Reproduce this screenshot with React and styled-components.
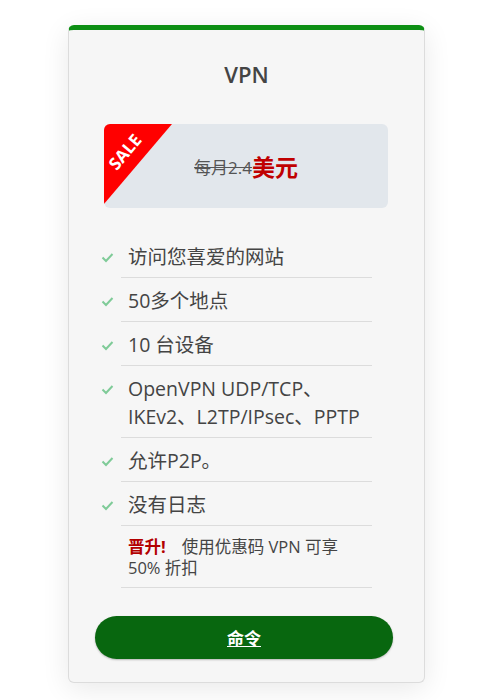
import styled, { createGlobalStyle } from 'styled-components'

const GlobalStyle = createGlobalStyle`
  body {
    margin: 0;
    background: #ffffff;
    font-family: "Open Sans", "Noto Sans CJK SC", sans-serif;
  }
`

const Page = styled.div`
  padding: 25px 0 18px 68px;
`

const Card = styled.div`
  width: 355px;
  background: #f6f6f6;
  border: 1px solid #dcdcdc;
  border-top: 5px solid #0d8f14;
  border-radius: 6px;
  box-shadow: 0 6px 28px rgba(0, 0, 0, 0.09);
  padding-bottom: 23px;
`

const Title = styled.h2`
  margin: 30px 0 0;
  text-align: center;
  font-size: 22px;
  font-weight: 600;
  line-height: 28px;
  color: #444;
`

const PriceBox = styled.div`
  position: relative;
  margin: 36px 36px 0 35px;
  height: 84px;
  background: #e2e7ec;
  border-radius: 6px;
  display: flex;
  align-items: center;
  justify-content: center;
  overflow: hidden;
`

const Ribbon = styled.div`
  position: absolute;
  top: 0;
  left: 0;
  width: 68px;
  height: 80px;
  background: #ff0000;
  clip-path: polygon(0 0, 100% 0, 0 100%);
`

const RibbonText = styled.span`
  position: absolute;
  left: -1px;
  top: 17px;
  width: 44px;
  text-align: center;
  line-height: 22px;
  transform: rotate(-50deg);
  color: #fff;
  font-weight: 700;
  font-size: 17px;
`

const OldPrice = styled.span`
  font-size: 17px;
  color: #555;
  text-decoration: line-through;
`

const NewPrice = styled.span`
  font-size: 23px;
  font-weight: 700;
  color: #c00000;
`

const List = styled.ul`
  list-style: none;
  margin: 26px 0 0 24px;
  padding: 0;
`

const Row = styled.li`
  display: flex;
`

const CheckCell = styled.div`
  width: 28px;
  flex: none;
  display: flex;
  justify-content: center;
  padding-top: 18px;
`

const Content = styled.div`
  width: 244px;
  padding: ${p => (p.$promo ? '10px 0 9px 7px' : '9px 0 6px 7px')};
  border-bottom: 1px solid #dcdcdc;
  font-size: ${p => (p.$promo ? '16.5px' : '19.5px')};
  line-height: ${p => (p.$promo ? '21px' : '28px')};
  color: #444;
`

const Promo = styled.strong`
  display: inline-block;
  color: #b30000;
  font-weight: 700;
  margin-right: 16px;
`

const Button = styled.a`
  display: flex;
  align-items: center;
  justify-content: center;
  margin: 28px 31px 0 26px;
  height: 43px;
  border-radius: 22px;
  background: #08670f;
  box-shadow: 0 1px 2px rgba(0, 0, 0, 0.25);
  color: #fff;
  font-size: 17px;
  font-weight: 700;
  text-decoration: underline;
  cursor: pointer;
`

const Check = () => (
  <svg width="13" height="11" viewBox="0 0 13 11">
    <path d="M1.5 5.5 L5 9 L11.5 2" fill="none" stroke="#7fcb98" strokeWidth="2" />
  </svg>
)

const features = [
  '访问您喜爱的网站',
  '50多个地点',
  '10 台设备',
  'OpenVPN UDP/TCP、IKEv2、L2TP/IPsec、PPTP',
  '允许P2P。',
  '没有日志',
]

const App = () => {
  return (
    <Page>
      <GlobalStyle />
      <Card>
        <Title>VPN</Title>
        <PriceBox>
          <Ribbon>
            <RibbonText>SALE</RibbonText>
          </Ribbon>
          <OldPrice>每月2.4</OldPrice>
          <NewPrice>美元</NewPrice>
        </PriceBox>
        <List>
          {features.map(f => (
            <Row key={f}>
              <CheckCell>
                <Check />
              </CheckCell>
              <Content>{f}</Content>
            </Row>
          ))}
          <Row>
            <CheckCell />
            <Content $promo>
              <Promo>晋升!</Promo>使用优惠码 VPN 可享 50% 折扣
            </Content>
          </Row>
        </List>
        <Button>命令</Button>
      </Card>
    </Page>
  )
}

export default App
